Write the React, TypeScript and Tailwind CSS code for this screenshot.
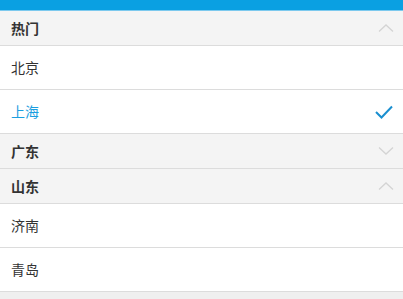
import React from 'react';

type Group = { name: string; open: boolean; items: string[] };

const groups: Group[] = [
  { name: '热门', open: true, items: ['北京', '上海'] },
  { name: '广东', open: false, items: [] },
  { name: '山东', open: true, items: ['济南', '青岛'] },
];

function Chevron({ up }: { up: boolean }) {
  return (
    <svg width="16" height="10" viewBox="0 0 16 10" className="text-[#d4d4d4]">
      <path
        d={up ? 'M1 8.5 L8 2 L15 8.5' : 'M1 1.5 L8 8 L15 1.5'}
        fill="none"
        stroke="currentColor"
        strokeWidth="1.3"
      />
    </svg>
  );
}

export default function App() {
  const selected = '上海';
  return (
    <div
      className="min-h-[299px] bg-[#efefef] text-[14px] text-[#333]"
      style={{ fontFamily: '"Noto Sans CJK SC", "Noto Sans", sans-serif' }}
    >
      <div className="h-[11px] bg-[#0aa0e2] border-b border-[#7cc9ee]" />
      {groups.map((g) => (
        <div key={g.name}>
          <div className="flex h-[35px] items-center justify-between bg-[#f4f4f4] pl-[11px] pr-[9px] border-b border-[#dcdcdc] font-bold">
            <span>{g.name}</span>
            <Chevron up={g.open} />
          </div>
          {g.open &&
            g.items.map((it) => (
              <div
                key={it}
                className="flex h-[44px] items-center justify-between bg-white pl-[11px] pr-[10px] border-b border-[#dcdcdc]"
              >
                <span className={it === selected ? 'text-[#1a9ee0]' : ''}>{it}</span>
                {it === selected && (
                  <svg width="18" height="14" viewBox="0 0 18 14">
                    <path d="M1 7 L6.5 12.5 L17 1.5" fill="none" stroke="#1a8fd0" strokeWidth="2" />
                  </svg>
                )}
              </div>
            ))}
        </div>
      ))}
    </div>
  );
}
